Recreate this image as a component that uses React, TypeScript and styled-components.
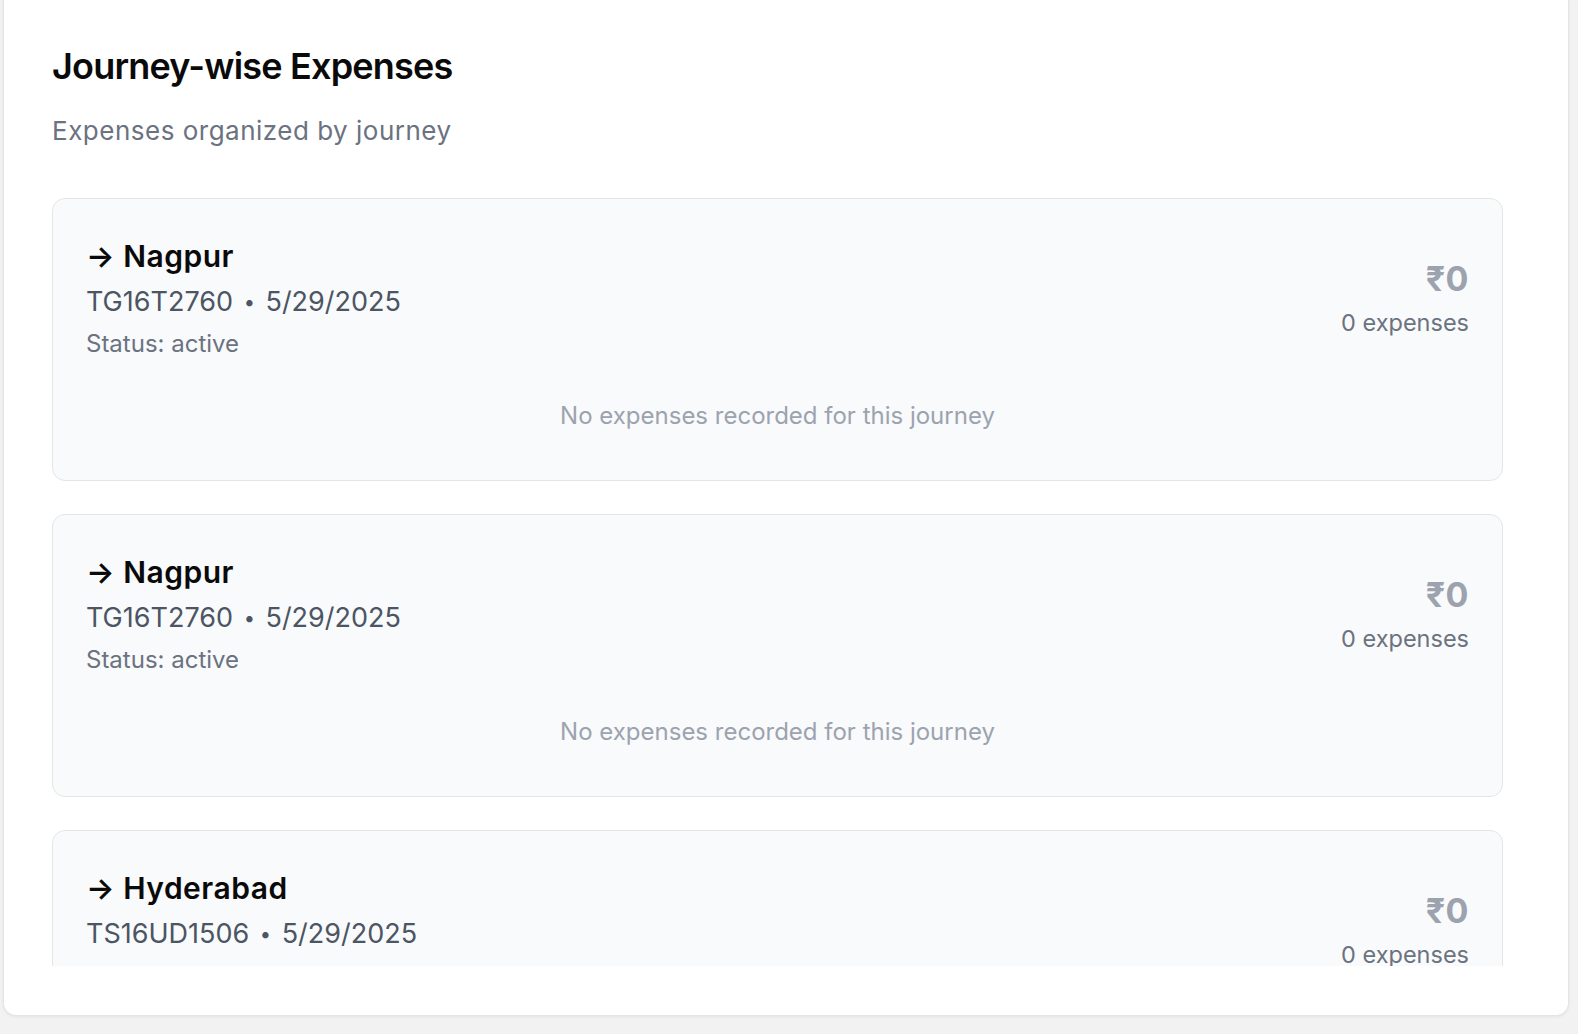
import React from "react";
import styled, { createGlobalStyle } from "styled-components";

const GlobalStyle = createGlobalStyle`
  html, body {
    margin: 0;
    padding: 0;
    background: #f2f2f3;
    font-family: Inter, "Noto Sans", "Liberation Sans", sans-serif;
    -webkit-font-smoothing: antialiased;
  }
  * { box-sizing: border-box; }
`;

const Page = styled.div`
  width: 1578px;
  height: 1034px;
  padding: 0 9px 18px 3px;
  overflow: hidden;
`;

const Panel = styled.section`
  background: #ffffff;
  border: 1px solid #e4e4e7;
  border-top: none;
  border-radius: 0 0 13px 13px;
  box-shadow: 0 1px 3px rgba(0, 0, 0, 0.06);
  padding: 46px 48px 49px 48px;
  display: flex;
  flex-direction: column;
`;

const Title = styled.h2`
  margin: 0;
  font-size: 36px;
  line-height: 40px;
  font-weight: 600;
  color: #0a0a0a;
  letter-spacing: -0.8px;
`;

const Subtitle = styled.p`
  margin: 28px 0 0;
  font-size: 26px;
  line-height: 34px;
  letter-spacing: 0.5px;
  color: #6b7280;
`;

const ScrollArea = styled.div`
  margin-top: 50px;
  height: 768px;
  overflow: hidden;
  padding-right: 17px;
  display: flex;
  flex-direction: column;
  gap: 33px;
`;

const JourneyCard = styled.article`
  flex: none;
  background: #f9fafb;
  border: 1px solid #e5e5e5;
  border-radius: 13px;
  padding: 36px 33px 50px 33px;
`;

const HeaderRow = styled.div`
  display: flex;
  justify-content: space-between;
  align-items: flex-start;
`;

const Info = styled.div`
  display: flex;
  flex-direction: column;
`;

const Destination = styled.div`
  font-size: 30px;
  line-height: 42px;
  font-weight: 600;
  letter-spacing: 0.5px;
  color: #0a0a0a;
`;

const Meta = styled.div`
  font-size: 27px;
  line-height: 50px;
  color: #4b5563;
`;

const Dot = styled.span`
  font-size: 20px;
  padding: 0 3px;
  vertical-align: 2px;
`;

const Status = styled.div`
  margin-top: 2px;
  font-size: 24px;
  line-height: 29px;
  color: #6b7280;
`;

const Totals = styled.div`
  padding-top: 24px;
  display: flex;
  flex-direction: column;
  align-items: flex-end;
`;

const Amount = styled.div`
  font-size: 34px;
  line-height: 40px;
  font-weight: 700;
  letter-spacing: 0.5px;
  color: #9ca3af;
`;

const Count = styled.div`
  margin-top: 8px;
  font-size: 23.5px;
  line-height: 32px;
  color: #6b7280;
`;

const Empty = styled.div`
  margin-top: 43px;
  text-align: center;
  font-size: 24px;
  line-height: 29px;
  color: #9ca3af;
`;

type Journey = {
  destination: string;
  vehicle: string;
  date: string;
  status: string;
  total: number;
  count: number;
};

const journeys: Journey[] = [
  { destination: "Nagpur", vehicle: "TG16T2760", date: "5/29/2025", status: "active", total: 0, count: 0 },
  { destination: "Nagpur", vehicle: "TG16T2760", date: "5/29/2025", status: "active", total: 0, count: 0 },
  { destination: "Hyderabad", vehicle: "TS16UD1506", date: "5/29/2025", status: "active", total: 0, count: 0 },
];

export default function App() {
  return (
    <>
      <GlobalStyle />
      <Page>
        <Panel>
          <Title>Journey-wise Expenses</Title>
          <Subtitle>Expenses organized by journey</Subtitle>
          <ScrollArea>
            {journeys.map((j, i) => (
              <JourneyCard key={i}>
                <HeaderRow>
                  <Info>
                    <Destination>→ {j.destination}</Destination>
                    <Meta>
                      {j.vehicle} <Dot>•</Dot> {j.date}
                    </Meta>
                    <Status>Status: {j.status}</Status>
                  </Info>
                  <Totals>
                    <Amount>₹{j.total}</Amount>
                    <Count>{j.count} expenses</Count>
                  </Totals>
                </HeaderRow>
                {j.count === 0 && <Empty>No expenses recorded for this journey</Empty>}
              </JourneyCard>
            ))}
          </ScrollArea>
        </Panel>
      </Page>
    </>
  );
}
